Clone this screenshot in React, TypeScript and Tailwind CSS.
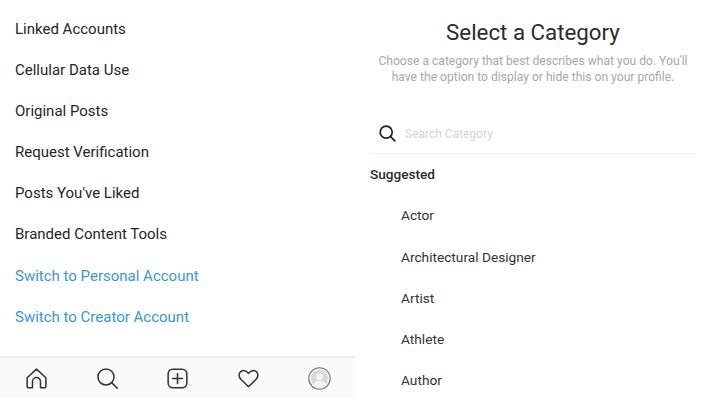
import React from "react";

const settingsRows = [
  "Linked Accounts",
  "Cellular Data Use",
  "Original Posts",
  "Request Verification",
  "Posts You've Liked",
  "Branded Content Tools",
];
const accountRows = ["Switch to Personal Account", "Switch to Creator Account"];
const categories = ["Actor", "Architectural Designer", "Artist", "Athlete", "Author"];

const NavBar = () => {
  return (
    <div className="h-[43px] mt-auto mb-[1px] bg-[#fafafa] border-t-2 border-[#ececec] flex items-center justify-between pl-[26px] pr-[24px] text-[#333]">
      <svg width="21" height="21" viewBox="0 0 22 22" fill="none" stroke="currentColor" strokeWidth="1.6" strokeLinejoin="round">
        <path d="M1.2 10.2 11 1.2l9.8 9v9.2a1.2 1.2 0 0 1-1.2 1.2h-4.4v-6.4a4.2 4.2 0 0 0-8.4 0v6.4H2.4a1.2 1.2 0 0 1-1.2-1.2z" />
      </svg>
      <svg width="21" height="21" viewBox="0 0 22 22" fill="none" stroke="currentColor" strokeWidth="1.6" strokeLinecap="round">
        <circle cx="9.4" cy="9.4" r="8.4" />
        <path d="m15.6 15.6 5.6 5.6" />
      </svg>
      <svg width="21" height="21" viewBox="0 0 22 22" fill="none" stroke="currentColor" strokeWidth="1.6" strokeLinecap="round">
        <rect x="1.2" y="1.2" width="19.6" height="19.6" rx="5" />
        <path d="M11 5.8v10.4M5.8 11h10.4" />
      </svg>
      <svg width="21" height="19" viewBox="0 0 22 20" fill="none" stroke="currentColor" strokeWidth="1.6" strokeLinejoin="round">
        <path d="M11 18.6 3 10.8C.4 8.2.6 4.6 2.8 2.8c2.4-2 5.8-1.4 8.2 1.8 2.4-3.2 5.8-3.8 8.2-1.8 2.2 1.8 2.4 5.4-.2 8z" />
      </svg>
      <svg width="23" height="23" viewBox="0 0 24 24">
        <circle cx="12" cy="12" r="11.2" fill="#f4f4f4" stroke="#7a7a7a" strokeWidth="1.2" />
        <circle cx="12" cy="12" r="8.8" fill="#d8d8d8" />
        <circle cx="12" cy="10" r="3.8" fill="#f2f2f2" />
        <path d="M5.6 18.4c1.2-3 3.6-4.2 6.4-4.2s5.2 1.2 6.4 4.2a8.8 8.8 0 0 1-12.8 0z" fill="#f2f2f2" />
      </svg>
    </div>
  );
};

export default function App() {
  return (
    <div className="w-[711px] h-[400px] flex bg-white overflow-hidden font-['Roboto',sans-serif]">
      <div className="w-[355px] flex flex-col">
        <div className="pt-[8.2px] pl-[15px]">
          {settingsRows.map((row) => (
            <div key={row} className="h-[41.2px] flex items-center text-[15px] text-[#262626]">
              {row}
            </div>
          ))}
          {accountRows.map((row) => (
            <div key={row} className="h-[41.2px] flex items-center text-[15px] text-[#3897d3]">
              {row}
            </div>
          ))}
        </div>
        <NavBar />
      </div>

      <div className="w-[356px] flex flex-col pl-[15px] pr-[15px]">
        <div className="shrink-0 pt-[17px] text-center text-[22.3px] leading-[30px] text-[#2b2b2b]">Select a Category</div>
        <div className="shrink-0 mt-[6px] text-center text-[12.1px] leading-[16px] text-[#a8a8a8]">
          Choose a category that best describes what you do. You'll
          <br />
          have the option to display or hide this on your profile.
        </div>
        <div className="shrink-0 mt-[30px] h-[39px] pb-[1px] flex items-center gap-[9px] pl-[9px] border-b border-[#efefef]">
          <svg width="17" height="17" viewBox="0 0 17 17" fill="none" stroke="#222" strokeWidth="1.7" strokeLinecap="round">
            <circle cx="7.2" cy="7.2" r="6" />
            <path d="m11.6 11.6 4.2 4.2" />
          </svg>
          <span className="text-[12px] text-[#d4d4d4]">Search Category</span>
        </div>
        <div className="shrink-0 mt-[11px] text-[13.6px] leading-[18px] font-medium text-[#2b2b2b]">Suggested</div>
        <div className="shrink-0 pl-[31px] mt-[12px]">
          {categories.map((cat) => (
            <div key={cat} className="h-[41.2px] flex items-center text-[13.7px] text-[#333]">
              {cat}
            </div>
          ))}
        </div>
      </div>
    </div>
  );
}
